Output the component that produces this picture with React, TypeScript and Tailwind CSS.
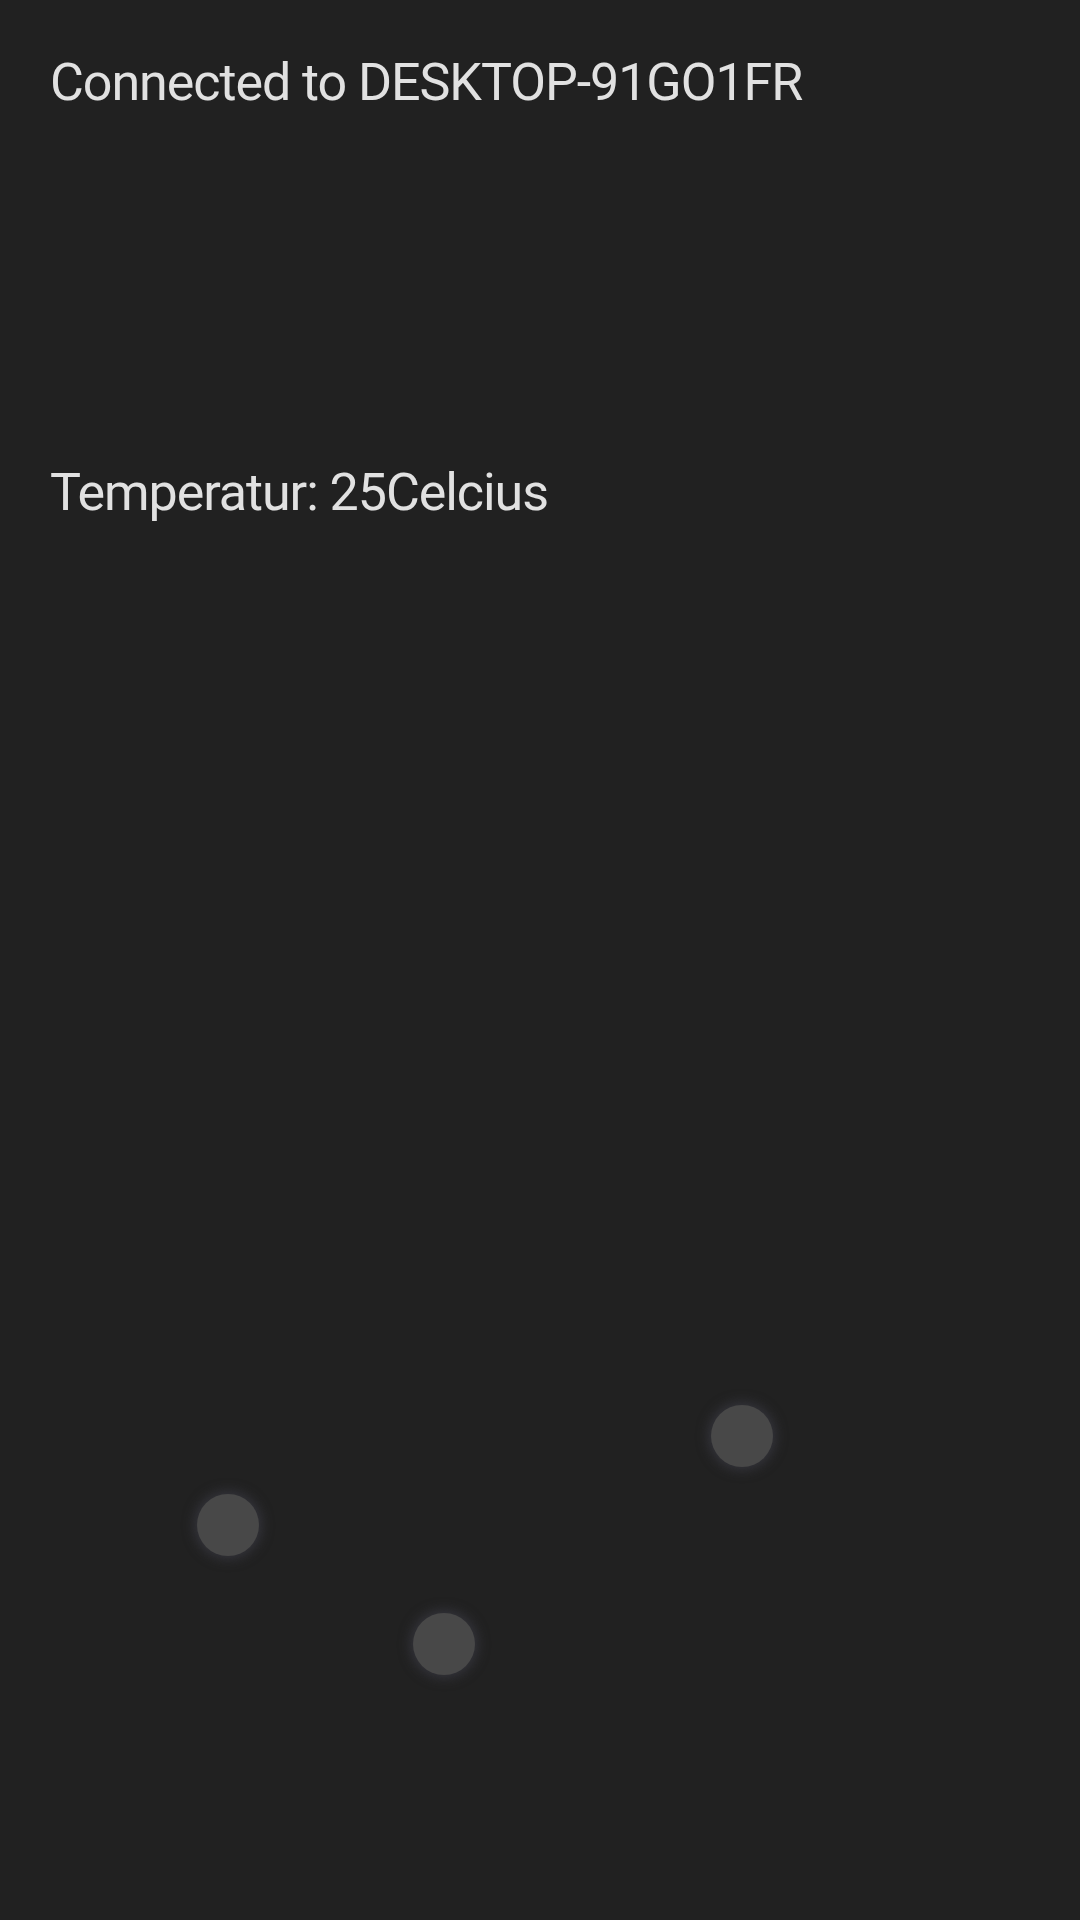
const dots = [
  { left: 'left-[711px]', top: 'top-[1405px]' },
  { left: 'left-[197px]', top: 'top-[1494px]' },
  { left: 'left-[413px]', top: 'top-[1613px]' },
];

export default function App() {
  return (
    <div className="relative w-[1080px] h-[1920px] bg-[#212121] overflow-hidden font-['Roboto',sans-serif]">
      <div className="flex flex-col pl-[50px] pt-[52px] text-[52px] leading-[61px] tracking-[-1.05px] text-[#e1e1e1]">
        <p>Connected to DESKTOP-91GO1FR</p>
        <p className="mt-[349px]">Temperatur: 25Celcius</p>
      </div>

      {dots.map((d, i) => (
        <div
          key={i}
          className={`absolute ${d.left} ${d.top} w-[62px] h-[62px] rounded-full bg-[#484848] shadow-[0_0_12px_3px_rgba(58,58,66,0.8)]`}
        />
      ))}
    </div>
  );
}
